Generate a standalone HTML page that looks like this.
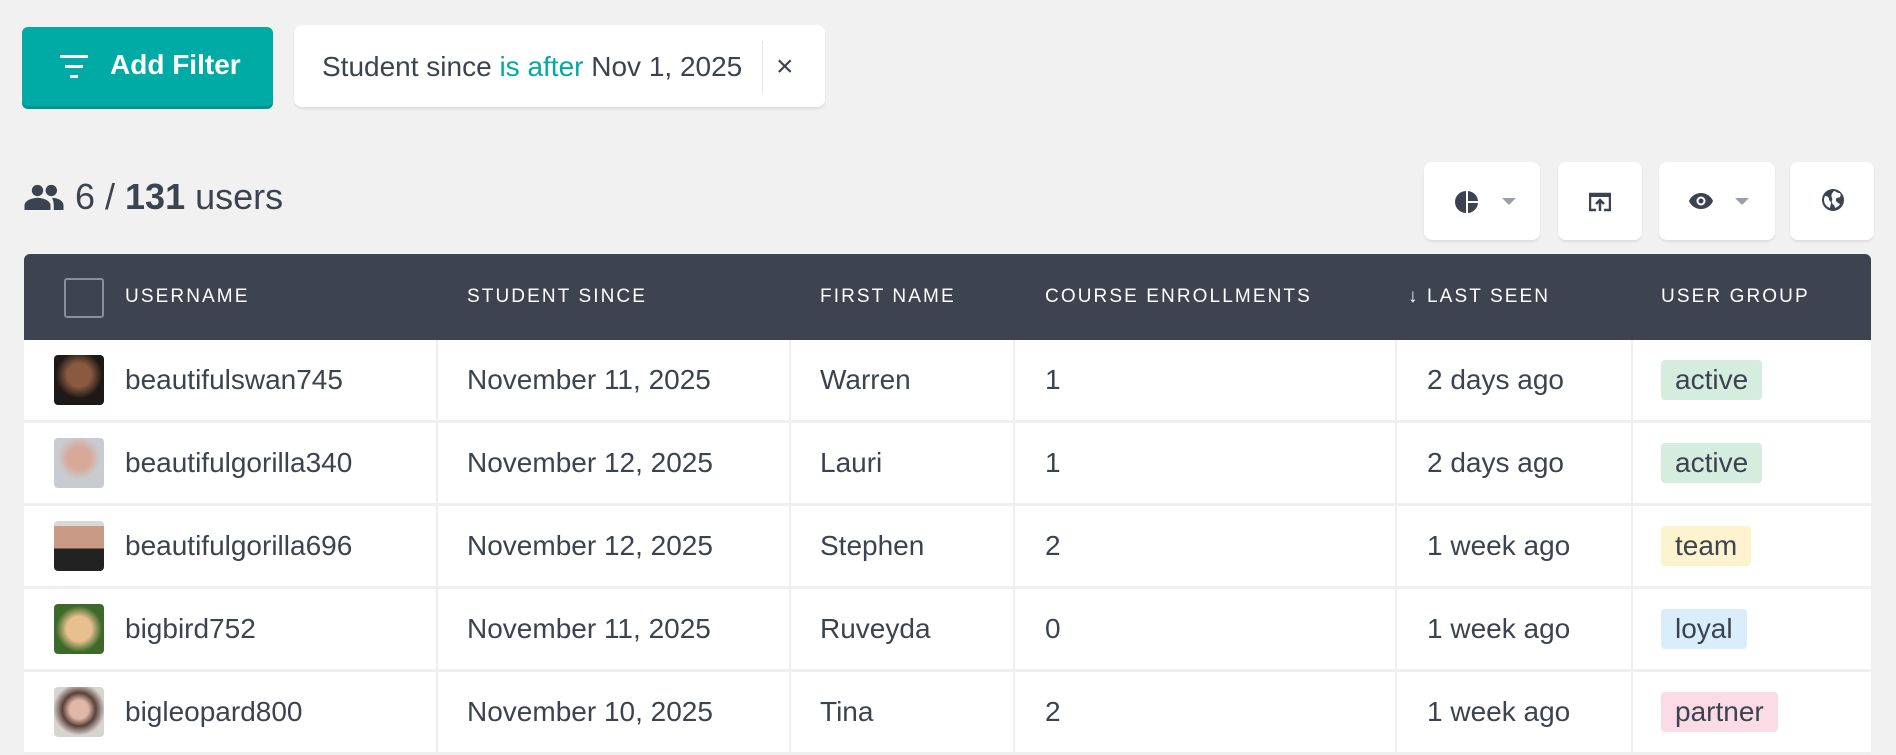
<!DOCTYPE html>
<html><head><style>
*{margin:0;padding:0;box-sizing:border-box}
body{width:1896px;height:754px;background:#f1f1f1;font-family:"Liberation Sans",sans-serif;color:#3c4350;position:relative;overflow:hidden}
.abs{position:absolute}
.btn{position:absolute;background:#fff;border-radius:8px;box-shadow:0 2px 2px rgba(0,0,0,.08)}
.hd{position:absolute;top:254px;left:24px;width:1847px;height:86px;background:#3d4450;border-radius:6px 6px 0 0}
.th{position:absolute;top:286px;color:#fff;font-size:19px;letter-spacing:2.1px}
.row{position:absolute;left:24px;width:1847px;height:83px;background:#fff;border-bottom:3px solid #efefef}
.c{position:absolute;top:0;height:80px;line-height:80px;font-size:28px;color:#3c4350}
.vl{position:absolute;top:0;width:2px;height:83px;background:#efefef}
.av{position:absolute;left:30px;top:15px;width:50px;height:50px;border-radius:4px}
.badge{position:absolute;left:1637px;top:20px;height:40px;line-height:40px;padding:0 14px;border-radius:4px;font-size:28px}
</style></head><body>
<div class="abs" style="left:22px;top:27px;width:251px;height:79px;background:#00aba6;border-radius:6px;box-shadow:0 3px 0 #009590"></div>
<svg class="abs" style="left:60px;top:55px" width="34" height="26" viewBox="0 0 34 26"><rect x="0" y="0" width="28" height="3" fill="#fff"/><rect x="5" y="10" width="18" height="3" fill="#fff"/><rect x="10" y="20" width="8" height="3" fill="#fff"/></svg>
<div class="abs" style="left:110px;top:49px;font-size:28px;font-weight:bold;color:#fff">Add Filter</div>
<div class="btn" style="left:294px;top:25px;width:531px;height:82px"></div>
<div class="abs" style="left:322px;top:51px;font-size:28px;color:#3c4350">Student since <span style="color:#00aba6">is after</span> Nov 1, 2025</div>
<div class="abs" style="left:762px;top:41px;width:1px;height:52px;background:#e4e4e4"></div>
<div class="abs" style="left:776px;top:50px;font-size:30px;color:#3c4350">×</div>

<svg class="abs" style="left:24px;top:184px" width="40" height="26" viewBox="0 0 24 16"><circle cx="8" cy="4" r="3.5" fill="#3c4350"/><circle cx="16.5" cy="4" r="3.5" fill="#3c4350"/><path d="M0 16v-3c0-2.5 4-4.5 8-4.5s8 2 8 4.5v3z" fill="#3c4350"/><path d="M17 8.5c3.5 0 7 1.8 7 4.5v3h-6v-3c0-1.8-.5-3.2-1-4.5z" fill="#3c4350"/></svg>
<div class="abs" style="left:75px;top:176px;font-size:36px;color:#3c4350">6 / <b>131</b> users</div>

<div class="btn" style="left:1424px;top:162px;width:116px;height:78px"></div>
<svg class="abs" style="left:1455px;top:190px" width="24" height="24" viewBox="0 0 24 24"><path d="M11 1A11 11 0 0 0 11 23z M13 1v10h10A11 11 0 0 0 13 1z M13 13v10a11 11 0 0 0 10-10z" fill="#3c4350"/></svg>
<svg class="abs" style="left:1502px;top:198px" width="14" height="8"><path d="M0 0h14L7 7z" fill="#9a9ea5"/></svg>
<div class="btn" style="left:1558px;top:162px;width:84px;height:78px"></div>
<svg class="abs" style="left:1589px;top:192px" width="22" height="20" viewBox="0 0 22 20"><path d="M1 7V2h20v16h-6M7 18H1V7" fill="none" stroke="#3c4350" stroke-width="2.5"/><rect x="1" y="1" width="20" height="4" fill="#3c4350"/><path d="M11 19V9M7 12l4-4 4 4" fill="none" stroke="#3c4350" stroke-width="2.5"/></svg>
<div class="btn" style="left:1659px;top:162px;width:116px;height:78px"></div>
<svg class="abs" style="left:1688px;top:192px" width="26" height="18" viewBox="0 0 26 18"><path d="M13 1C7 1 2.5 5 1 9c1.5 4 6 8 12 8s10.5-4 12-8C23.5 5 19 1 13 1z" fill="#3c4350"/><circle cx="13" cy="9" r="4.5" fill="#fff"/><circle cx="13" cy="9" r="2.5" fill="#3c4350"/></svg>
<div class="abs" style="left:1735px;top:198px;width:0;height:0;border-left:7px solid transparent;border-right:7px solid transparent;border-top:7px solid #9a9ea5"></div>
<div class="btn" style="left:1790px;top:162px;width:84px;height:78px"></div>
<svg class="abs" style="left:1821px;top:188px" width="24" height="24" viewBox="0 0 24 24"><circle cx="12" cy="12" r="11" fill="#3c4350"/><path d="M4 8c2 0 4 1 4 3s2 2 2 4-1 3-1 5c-3-1-6-4-6-8 0-1.5.5-3 1-4zM13 3c2 0 3 2 5 2s2 3 1 4-3 0-4 2 2 4 4 5c-1 2-3 3-5 4 0-3-2-3-3-5s1-3 0-5-1-4 2-7z" fill="#fff"/></svg>

<div class="hd"></div>
<div class="abs" style="left:64px;top:278px;width:40px;height:40px;border:2px solid #8a9099;border-radius:3px"></div>
<div class="th" style="left:125px">USERNAME</div>
<div class="th" style="left:467px">STUDENT SINCE</div>
<div class="th" style="left:820px">FIRST NAME</div>
<div class="th" style="left:1045px">COURSE ENROLLMENTS</div>
<div class="th" style="left:1408px">↓</div>
<div class="th" style="left:1427px">LAST SEEN</div>
<div class="th" style="left:1661px">USER GROUP</div>

<div class="row" style="top:340px"><div class="av" style="background:radial-gradient(circle at 50% 40%,#8a5a40 0 30%,#1e1816 60%)"></div><div class="c" style="left:101px">beautifulswan745</div><div class="vl" style="left:412px"></div><div class="c" style="left:443px">November 11, 2025</div><div class="vl" style="left:765px"></div><div class="c" style="left:796px">Warren</div><div class="vl" style="left:989px"></div><div class="c" style="left:1021px">1</div><div class="vl" style="left:1371px"></div><div class="c" style="left:1403px">2 days ago</div><div class="vl" style="left:1607px"></div><div class="badge" style="background:#d4eddf">active</div></div>
<div class="row" style="top:423px"><div class="av" style="background:radial-gradient(circle at 50% 40%,#d8a898 0 28%,#c8ccd0 55%)"></div><div class="c" style="left:101px">beautifulgorilla340</div><div class="vl" style="left:412px"></div><div class="c" style="left:443px">November 12, 2025</div><div class="vl" style="left:765px"></div><div class="c" style="left:796px">Lauri</div><div class="vl" style="left:989px"></div><div class="c" style="left:1021px">1</div><div class="vl" style="left:1371px"></div><div class="c" style="left:1403px">2 days ago</div><div class="vl" style="left:1607px"></div><div class="badge" style="background:#d4eddf">active</div></div>
<div class="row" style="top:506px"><div class="av" style="background:linear-gradient(#d8d8d8 0 10%,#c99a84 10% 55%,#222 55%)"></div><div class="c" style="left:101px">beautifulgorilla696</div><div class="vl" style="left:412px"></div><div class="c" style="left:443px">November 12, 2025</div><div class="vl" style="left:765px"></div><div class="c" style="left:796px">Stephen</div><div class="vl" style="left:989px"></div><div class="c" style="left:1021px">2</div><div class="vl" style="left:1371px"></div><div class="c" style="left:1403px">1 week ago</div><div class="vl" style="left:1607px"></div><div class="badge" style="background:#fdf3cf">team</div></div>
<div class="row" style="top:589px"><div class="av" style="background:radial-gradient(circle at 50% 50%,#e8c090 0 35%,#3d6a2a 65%)"></div><div class="c" style="left:101px">bigbird752</div><div class="vl" style="left:412px"></div><div class="c" style="left:443px">November 11, 2025</div><div class="vl" style="left:765px"></div><div class="c" style="left:796px">Ruveyda</div><div class="vl" style="left:989px"></div><div class="c" style="left:1021px">0</div><div class="vl" style="left:1371px"></div><div class="c" style="left:1403px">1 week ago</div><div class="vl" style="left:1607px"></div><div class="badge" style="background:#d9eefa">loyal</div></div>
<div class="row" style="top:672px"><div class="av" style="background:radial-gradient(circle at 50% 45%,#e0b8a8 0 25%,#5a4038 45%,#d8d4d0 70%)"></div><div class="c" style="left:101px">bigleopard800</div><div class="vl" style="left:412px"></div><div class="c" style="left:443px">November 10, 2025</div><div class="vl" style="left:765px"></div><div class="c" style="left:796px">Tina</div><div class="vl" style="left:989px"></div><div class="c" style="left:1021px">2</div><div class="vl" style="left:1371px"></div><div class="c" style="left:1403px">1 week ago</div><div class="vl" style="left:1607px"></div><div class="badge" style="background:#fbdbe6">partner</div></div>
</body></html>
